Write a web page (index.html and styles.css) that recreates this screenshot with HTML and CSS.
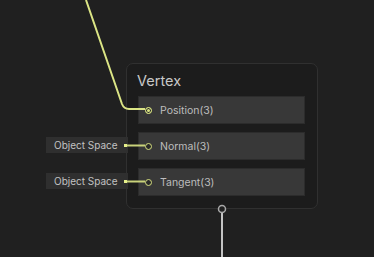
FILE: index.html
```html
<!DOCTYPE html>
<html lang="en">
<head>
    <meta charset="UTF-8">
    <meta name="viewport" content="width=device-width, initial-scale=1.0">
    <title>Vertex</title>
    <link rel="stylesheet" href="styles.css">
</head>
<body>
    <div class="graph">
        <!-- wires -->
        <svg class="wires" width="374" height="257" viewBox="0 0 374 257">
            <path d="M86 0 L122 104 Q124 109 129 109 L145 109" class="wire"/>
            <line x1="127" y1="145.5" x2="145" y2="145.5" class="wire dim"/>
            <line x1="127" y1="181.5" x2="145" y2="181.5" class="wire dim"/>
            <line x1="222" y1="212" x2="222" y2="257" class="wire-out"/>
            <circle cx="222" cy="209" r="3.5" class="port-out"/>
        </svg>

        <div class="inline-value" style="top: 137px">
            <span>Object Space</span>
            <i class="dot"></i>
        </div>
        <div class="inline-value" style="top: 173px">
            <span>Object Space</span>
            <i class="dot"></i>
        </div>

        <div class="node">
            <div class="node-title">Vertex</div>
            <div class="slots">
                <div class="slot">
                    <i class="port filled"></i>
                    <span>Position(3)</span>
                </div>
                <div class="slot">
                    <i class="port"></i>
                    <span>Normal(3)</span>
                </div>
                <div class="slot">
                    <i class="port"></i>
                    <span>Tangent(3)</span>
                </div>
            </div>
        </div>
    </div>
</body>
</html>
```

FILE: styles.css
```css
body {
    margin: 0;
    background-color: #202020;
    font-family: Inter, "Noto Sans", sans-serif;
    overflow: hidden;
}

.graph {
    position: relative;
    width: 374px;
    height: 257px;
}

.wires {
    position: absolute;
    left: 0;
    top: 0;
    z-index: 3;
}

.wire {
    fill: none;
    stroke: #dbe585;
    stroke-width: 2;
}

.wire.dim {
    stroke: #c9d27a;
}

.wire-out {
    stroke: #c4c4c4;
    stroke-width: 2;
}

.port-out {
    fill: #202020;
    stroke: #a8a8a8;
    stroke-width: 1.5;
}

.node {
    position: absolute;
    left: 126px;
    top: 63px;
    width: 190px;
    height: 144px;
    background-color: #1c1c1c;
    border: 1px solid #303030;
    border-radius: 7px;
    z-index: 1;
}

.node-title {
    height: 32px;
    padding-left: 10px;
    line-height: 34px;
    font-size: 14.5px;
    color: #c8c8c8;
}

.slots {
    display: flex;
    flex-direction: column;
    gap: 8px;
    padding: 0 12px 0 11px;
}

.slot {
    display: flex;
    align-items: center;
    height: 28px;
    padding-top: 1px;
    background-color: #383838;
    border: 1px solid #2c2c2c;
    box-sizing: border-box;
    font-size: 10.5px;
    color: #bdbdbd;
}

.slot span {
    margin-left: 8px;
}

.port {
    display: block;
    width: 5px;
    height: 5px;
    margin-left: 6px;
    border: 1.5px solid #d6e07f;
    border-radius: 50%;
    background-color: #2a2a2a;
}

.port.filled {
    background-color: #dbe585;
    box-shadow: inset 0 0 0 1px #2a2a2a;
}

.inline-value {
    position: absolute;
    left: 46px;
    width: 82px;
    height: 16px;
    display: flex;
    align-items: center;
    background-color: #2f2f2f;
    font-size: 10px;
    color: #c2c2c2;
    z-index: 2;
}

.inline-value span {
    margin-left: 8px;
    flex: 1;
}

.dot {
    display: block;
    width: 3px;
    height: 3px;
    margin-right: 1px;
    margin-top: 1px;
    background-color: #e5ef8a;
}
```
